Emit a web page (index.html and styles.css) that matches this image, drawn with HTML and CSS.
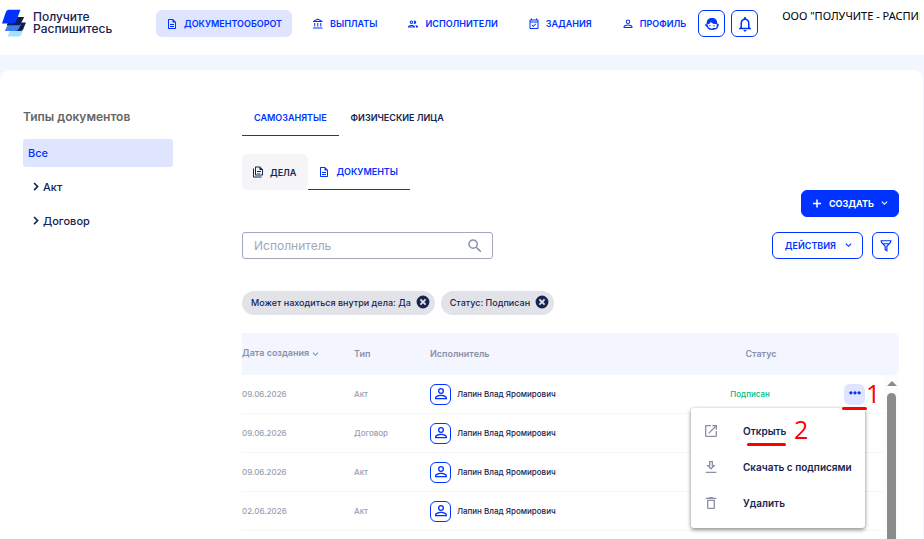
FILE: index.html
```html
<!DOCTYPE html>
<html lang="ru">
<head>
    <meta charset="UTF-8" />
    <meta name="viewport" content="width=device-width, initial-scale=1.0" />
    <title>Получите Распишитесь - Документы</title>
    <link rel="stylesheet" href="styles.css">
</head>
<body>

<!-- shared icons -->
<svg class="sprite" aria-hidden="true">
    <symbol id="i-doc" viewBox="0 0 24 24"><path d="M8 16h8v2H8zm0-4h8v2H8zm6-10H6c-1.100 0-2 .9-2 2v16c0 1.100.890 2 1.990 2H18c1.100 0 2-.9 2-2V8l-6-6zm4 18H6V4h7v5h5v11z"/></symbol>
    <symbol id="i-docs" viewBox="0 0 24 24"><path d="M16 1H8c-1.100 0-2 .9-2 2v14c0 1.100.9 2 2 2h12c1.100 0 2-.9 2-2V7l-6-6zm4 16H8V3h7v5h5v9zM2 5h2v16h15v2H4c-1.100 0-2-.9-2-2V5zm8 5h8v2h-8zm0 4h6v1h-6z"/></symbol>
    <symbol id="i-bank" viewBox="0 0 24 24"><path d="M6.500 10h-2v7h2v-7zm6 0h-2v7h2v-7zm8.500 9H2v2h19v-2zm-2.500-9h-2v7h2v-7zm-7-6.740L16.710 6H6.290l5.210-2.740m0-2.260L2 6v2h19V6l-9.500-5z"/></symbol>
    <symbol id="i-people" viewBox="0 0 24 24"><path d="M9 13.750c-2.340 0-7 1.170-7 3.500V19h14v-1.750c0-2.330-4.660-3.500-7-3.500zM4.340 17c.840-.580 2.870-1.250 4.660-1.250s3.820.670 4.660 1.250H4.340zM9 12c1.930 0 3.500-1.570 3.500-3.500S10.930 5 9 5 5.500 6.570 5.500 8.500 7.070 12 9 12zm0-5c.830 0 1.500.670 1.500 1.500S9.830 10 9 10s-1.500-.670-1.500-1.500S8.170 7 9 7zm7.040 6.810c1.160.840 1.960 1.960 1.960 3.440V19h4v-1.750c0-2.020-3.500-3.170-5.960-3.440zM15 12c1.930 0 3.500-1.570 3.500-3.500S16.930 5 15 5c-.540 0-1.040.130-1.500.350.630.890 1 1.980 1 3.150s-.370 2.260-1 3.150c.460.220.960.350 1.500.350z"/></symbol>
    <symbol id="i-task" viewBox="0 0 24 24"><path d="M19 3h-1V1h-2v2H8V1H6v2H5c-1.100 0-2 .9-2 2v15c0 1.100.9 2 2 2h14c1.100 0 2-.9 2-2V5c0-1.100-.9-2-2-2zm0 17H5V9h14v11zM5 7V5h14v2H5zm5.600 11.200l6-6-1.400-1.400-4.600 4.600-2.100-2.100-1.400 1.400z"/></symbol>
    <symbol id="i-person" viewBox="0 0 24 24"><path d="M12 3a4.500 4.500 0 1 0 0 9 4.500 4.500 0 0 0 0-9zm0 2a2.500 2.500 0 1 1 0 5 2.500 2.500 0 0 1 0-5zM12 13c-4 0-9 1.500-9 5v2h18v-2C21 14.500 16 13 12 13zm7 5H5c0-1.500 3.500-3 7-3s7 1.500 7 3z"/></symbol>
    <symbol id="i-bell" viewBox="0 0 24 24"><path d="M12 22c1.100 0 2-.9 2-2h-4c0 1.100.9 2 2 2zm6-6v-5c0-3.070-1.630-5.640-4.500-6.320V4a1.500 1.500 0 0 0-3 0v.680C7.640 5.360 6 7.920 6 11v5l-2 2v1h16v-1l-2-2zm-2 1H8v-6c0-2.480 1.510-4.500 4-4.500s4 2.020 4 4.500v6z"/></symbol>
    <symbol id="i-support" viewBox="0 0 24 24"><path fill="none" stroke="currentColor" stroke-width="2" d="M5 14c0 3.500 3 6 7 6 2 0 3.500-.5 4.500-1.500"/><path d="M12 3C7 3 4 6 4 10.500V13c4-.5 5.500-2.500 6-4.500 2 3 5.500 4 10 3.500V11c0-5-3-8-8-8zM2 11.500h3v4.500H4q-2 0-2-2zM19 11.500h3V14q0 3-3 3zM19 16h2c0 2.500-2 4-5 4h-3v-2h3c2 0 3-1 3-2z"/><circle cx="9" cy="14.500" r="1"/><circle cx="15" cy="14.500" r="1"/></symbol>
    <symbol id="i-down" viewBox="0 0 24 24"><path d="M6 6l6 6 6-6 2 2-8 8-8-8z"/></symbol>
    <symbol id="i-right" viewBox="0 0 24 24"><path d="M7 1l11 11L7 23l-3-3 8-8-8-8z"/></symbol>
    <symbol id="i-plus" viewBox="0 0 24 24"><path d="M20 12.500h-6.500V19h-3v-6.500H4v-3h6.500V3h3v6.500H20z"/></symbol>
    <symbol id="i-search" viewBox="0 0 24 24"><path d="M15.500 14h-.790l-.280-.270A6.470 6.470 0 0 0 16 9.500 6.500 6.500 0 1 0 9.500 16c1.610 0 3.090-.590 4.230-1.570l.270.280v.790l5 4.990L20.490 19l-4.990-5zm-6 0C7.010 14 5 11.990 5 9.500S7.010 5 9.500 5 14 7.010 14 9.500 11.990 14 9.500 14z"/></symbol>
    <symbol id="i-filter" viewBox="0 0 24 24"><path d="M2.500 2h19l-1 4.500-6 6.500v9L9.500 19v-6l-6-6.500zm2.600 2l.4 1.700L7 7.300h10l1.500-1.600.4-1.700zM8.700 9.200l2.800 3v5.700l1 .6v-6.300l2.800-3z"/></symbol>
    <symbol id="i-cancel" viewBox="0 0 24 24"><path d="M12 1a11 11 0 1 0 0 22 11 11 0 0 0 0-22zm5.500 14.300l-2.200 2.200L12 14.200l-3.300 3.300-2.200-2.200L9.800 12 6.500 8.700l2.200-2.200L12 9.800l3.300-3.300 2.200 2.200-3.300 3.300z"/></symbol>
    <symbol id="i-open" viewBox="0 0 24 24"><path d="M19 19H5V5h7V3H5a2 2 0 0 0-2 2v14a2 2 0 0 0 2 2h14c1.100 0 2-.9 2-2v-7h-2v7zM14 3v2h3.590l-9.830 9.830 1.410 1.410L19 6.410V10h2V3h-7z"/></symbol>
    <symbol id="i-download" viewBox="0 0 24 24"><path d="M19 9h-4V3H9v6H5l7 7 7-7zm-8 2V5h2v6h1.170L12 13.170 9.830 11H11zm-7 8h16v2H4z"/></symbol>
    <symbol id="i-trash" viewBox="0 0 24 24"><path d="M16 9v10H8V9h8m-1.500-6h-5l-1 1H4v2h16V4h-4.500l-1-1zM18 7H6v12c0 1.100.9 2 2 2h8c1.100 0 2-.9 2-2V7z"/></symbol>
    <symbol id="i-dots" viewBox="0 0 24 24"><circle cx="5" cy="10" r="2.800"/><circle cx="12" cy="10" r="2.800"/><circle cx="19" cy="10" r="2.800"/></symbol>
</svg>

<header class="header">
    <a class="logo" href="#">
        <svg class="logo-mark" viewBox="0 0 26 30" aria-hidden="true">
            <path fill="#a5e1ff" d="M11 20h13l-3 7q-1 2-3 2H6l3-7q1-2 2-2z"/>
            <path fill="#101c4c" d="M12 14h14l-3 7q-1 2-3 2H8z"/>
            <path fill="#3f80f0" d="M8 15h13l-3 6q-1 2-3 2H3l3-6q1-2 2-2z"/>
            <path fill="#101c4c" d="M10 8h14l-3 6q-1 3-3 3H5z"/>
            <path fill="#0033ff" d="M7 0h13l-4 11q-1 4-4 4H0L4 3q1-3 3-3z"/>
        </svg>
        <span>Получите<br>Распишитесь</span>
    </a>
    <nav class="nav">
        <a class="nav-link active" href="#"><svg class="icon"><use href="#i-doc"/></svg>ДОКУМЕНТООБОРОТ</a>
        <a class="nav-link" href="#"><svg class="icon"><use href="#i-bank"/></svg>ВЫПЛАТЫ</a>
        <a class="nav-link" href="#"><svg class="icon"><use href="#i-people"/></svg>ИСПОЛНИТЕЛИ</a>
        <a class="nav-link" href="#"><svg class="icon"><use href="#i-task"/></svg>ЗАДАНИЯ</a>
        <a class="nav-link" href="#"><svg class="icon"><use href="#i-person"/></svg>ПРОФИЛЬ</a>
    </nav>
    <div class="header-buttons">
        <button class="btn btn-square" type="button" aria-label="Поддержка"><svg class="icon icon-lg"><use href="#i-support"/></svg></button>
        <button class="btn btn-square" type="button" aria-label="Уведомления"><svg class="icon icon-xl"><use href="#i-bell"/></svg></button>
    </div>
    <div class="company">ООО "ПОЛУЧИТЕ - РАСПИШИТЕСЬ"</div>
</header>

<main class="panel">
    <aside class="sidebar">
        <h2>Типы документов</h2>
        <a class="type active" href="#">Все</a>
        <a class="type nested" href="#"><svg class="icon icon-sm"><use href="#i-right"/></svg>Акт</a>
        <a class="type nested" href="#"><svg class="icon icon-sm"><use href="#i-right"/></svg>Договор</a>
    </aside>

    <section class="content">
        <div class="tabs">
            <button class="tab active" type="button">САМОЗАНЯТЫЕ</button>
            <button class="tab" type="button">ФИЗИЧЕСКИЕ ЛИЦА</button>
        </div>
        <div class="subtabs">
            <button class="subtab" type="button"><svg class="icon"><use href="#i-docs"/></svg>ДЕЛА</button>
            <button class="subtab active" type="button"><svg class="icon"><use href="#i-doc"/></svg>ДОКУМЕНТЫ</button>
        </div>

        <div class="create-row">
            <button class="btn btn-primary" type="button"><svg class="icon"><use href="#i-plus"/></svg>СОЗДАТЬ<svg class="icon icon-sm"><use href="#i-down"/></svg></button>
        </div>

        <div class="toolbar">
            <label class="search">
                <input type="text" placeholder="Исполнитель" aria-label="Исполнитель">
                <svg class="icon icon-xl"><use href="#i-search"/></svg>
            </label>
            <button class="btn btn-actions" type="button">ДЕЙСТВИЯ<svg class="icon icon-sm"><use href="#i-down"/></svg></button>
            <button class="btn btn-square" type="button" aria-label="Фильтр"><svg class="icon icon-md"><use href="#i-filter"/></svg></button>
        </div>

        <div class="chips">
            <span class="chip">Может находиться внутри дела: Да<button type="button" aria-label="Убрать фильтр"><svg class="icon icon-md"><use href="#i-cancel"/></svg></button></span>
            <span class="chip">Статус: Подписан<button type="button" aria-label="Убрать фильтр"><svg class="icon icon-md"><use href="#i-cancel"/></svg></button></span>
        </div>

        <div class="table-box">
            <table class="docs">
                <colgroup>
                    <col class="col-date"><col class="col-type"><col><col class="col-status"><col class="col-more">
                </colgroup>
                <thead>
                    <tr>
                        <th>Дата создания<svg class="icon icon-sm"><use href="#i-down"/></svg></th>
                        <th>Тип</th>
                        <th>Исполнитель</th>
                        <th class="status-head">Статус</th>
                        <th></th>
                    </tr>
                </thead>
                <tbody>
                    <tr>
                        <td>09.06.2026</td>
                        <td>Акт</td>
                        <td><div class="person"><span class="avatar"><svg class="icon icon-lg"><use href="#i-person"/></svg></span>Лапин Влад Яромирович</div></td>
                        <td class="status">Подписан</td>
                        <td class="more">
                            <button class="more-btn" type="button" aria-label="Меню"><svg class="icon icon-md"><use href="#i-dots"/></svg></button>
                            <span class="mark mark-one">1</span>
                            <span class="stroke stroke-one"></span>
                            <div class="menu">
                                <button type="button"><svg class="icon icon-lg"><use href="#i-open"/></svg><span class="menu-text">Открыть<span class="stroke stroke-two"></span><span class="mark mark-two">2</span></span></button>
                                <button type="button"><svg class="icon icon-lg"><use href="#i-download"/></svg>Скачать с подписями</button>
                                <button type="button"><svg class="icon icon-lg"><use href="#i-trash"/></svg>Удалить</button>
                            </div>
                        </td>
                    </tr>
                    <tr>
                        <td>09.06.2026</td>
                        <td>Договор</td>
                        <td><div class="person"><span class="avatar"><svg class="icon icon-lg"><use href="#i-person"/></svg></span>Лапин Влад Яромирович</div></td>
                        <td></td>
                        <td></td>
                    </tr>
                    <tr>
                        <td>09.06.2026</td>
                        <td>Акт</td>
                        <td><div class="person"><span class="avatar"><svg class="icon icon-lg"><use href="#i-person"/></svg></span>Лапин Влад Яромирович</div></td>
                        <td></td>
                        <td></td>
                    </tr>
                    <tr>
                        <td>02.06.2026</td>
                        <td>Акт</td>
                        <td><div class="person"><span class="avatar"><svg class="icon icon-lg"><use href="#i-person"/></svg></span>Лапин Влад Яромирович</div></td>
                        <td></td>
                        <td></td>
                    </tr>
                </tbody>
            </table>
            <div class="scrollbar"><span class="arrow"></span><span class="thumb"></span></div>
        </div>
    </section>
</main>

</body>
</html>
```

FILE: styles.css
```css
* {
    box-sizing: border-box;
}
body {
    margin: 0;
    height: 100vh;
    display: flex;
    flex-direction: column;
    overflow: hidden;
    background: #f3f6ff;
    color: #172350;
    font-family: Inter, "Noto Sans", sans-serif;
    font-size: 9px;
    font-weight: 500;
}
a {
    color: inherit;
    text-decoration: none;
}
button, input {
    font: inherit;
    color: inherit;
    margin: 0;
}
button {
    padding: 0;
    border: none;
    background: none;
    cursor: pointer;
}
.sprite {
    position: absolute;
    width: 0;
    height: 0;
}
.icon {
    width: 12px;
    height: 12px;
    fill: currentColor;
    flex: none;
}
.icon-sm {
    width: 9px;
    height: 9px;
}
.icon-md {
    width: 14px;
    height: 14px;
}
.icon-lg {
    width: 16px;
    height: 16px;
}
.icon-xl {
    width: 18px;
    height: 18px;
}

/* header */
.header {
    display: flex;
    align-items: flex-start;
    flex: none;
    height: 55px;
    padding-top: 9px;
    background: #fff;
}
.logo {
    display: flex;
    gap: 7px;
    flex: none;
    width: 154px;
    padding-left: 2px;
    font-size: 12px;
    line-height: 12px;
}
.logo span {
    padding-top: 2px;
}
.logo-mark {
    width: 24px;
    height: 29px;
}
.nav {
    display: flex;
    gap: 10px;
    flex: none;
    padding: 1px 2px;
}
.nav-link {
    display: flex;
    align-items: center;
    gap: 6px;
    height: 27px;
    padding: 0 10px;
    border-radius: 6px;
    color: #0033ff;
    font-weight: 600;
}
.nav-link.active {
    background: #e0e5ff;
}
.header-buttons {
    display: flex;
    gap: 6px;
    padding-top: 1px;
}
.company {
    flex: 1;
    min-width: 0;
    margin: 0 4px 0 24px;
    overflow: hidden;
    white-space: nowrap;
    color: #000;
    font-family: "Noto Sans", sans-serif;
    font-size: 11px;
    font-weight: 400;
    line-height: 14px;
}
.btn {
    display: flex;
    align-items: center;
    justify-content: center;
    flex: none;
    height: 27px;
    border: 1px solid #0033ff;
    border-radius: 6px;
    background: #fff;
    color: #0033ff;
    font-weight: 600;
}
.btn-square {
    width: 27px;
}
.btn-primary {
    gap: 6px;
    padding: 0 9px;
    background: #0033ff;
    color: #fff;
    font-weight: 700;
}
.btn-actions {
    gap: 8px;
    padding: 0 9px 0 12px;
    margin-left: auto;
    margin-right: 9px;
}

/* main panel */
.panel {
    display: flex;
    flex: 1;
    gap: 69px;
    margin: 15px 1px 0 0;
    padding: 30px 24px 0 23px;
    border-radius: 10px 10px 0 0;
    background: #fff;
}
.sidebar {
    flex: none;
    width: 150px;
    font-size: 11px;
}
.sidebar h2 {
    margin: 8px 0 13px;
    color: #666;
    font-size: 12px;
    font-weight: 600;
    line-height: 18px;
}
.type {
    display: flex;
    align-items: center;
    height: 28px;
    margin-bottom: 6px;
    padding: 0 5px 1px;
    border-radius: 3px;
}
.type.active {
    background: #e0e5ff;
    color: #0033ff;
}
.type.nested {
    gap: 2px;
    padding: 0 9px 1px;
}
.content {
    display: flex;
    flex-direction: column;
    flex: 1;
    min-width: 0;
}
.tabs, .subtabs {
    display: flex;
    height: 36px;
}
.tab {
    padding: 0 12px;
    border-bottom: 1px solid transparent;
    font-weight: 600;
}
.subtabs {
    margin-top: 18px;
}
.subtab {
    display: flex;
    align-items: center;
    gap: 6px;
    padding: 0 12px 0 10px;
    border-radius: 6px;
    background: #f5f5f8;
    font-weight: 600;
}
.tab.active, .subtab.active {
    border-bottom: 1px solid #0033ff;
    border-radius: 0;
    background: #fff;
    color: #0033ff;
}
.create-row {
    display: flex;
    justify-content: flex-end;
}
.toolbar {
    display: flex;
    margin-top: 15px;
}
.search {
    display: flex;
    align-items: center;
    width: 251px;
    height: 27px;
    padding: 0 8px 0 11px;
    border: 1px solid #a3a7bc;
    border-radius: 3px;
    color: #8b90a9;
}
.search input {
    flex: 1;
    min-width: 0;
    padding: 0;
    border: none;
    outline: none;
    background: none;
    font-size: 12px;
    font-weight: 400;
}
.search input::placeholder {
    color: #a3a7bc;
}
.chips {
    display: flex;
    gap: 6px;
    margin-top: 32px;
}
.chip {
    display: flex;
    align-items: center;
    gap: 5px;
    height: 24px;
    padding: 0 5px 2px 9px;
    border-radius: 12px;
    background: #e2e3e9;
}
.chip button {
    display: flex;
}

/* documents table */
.table-box {
    position: relative;
    flex: 1;
    margin-top: 18px;
}
.docs {
    width: 100%;
    table-layout: fixed;
    border-collapse: separate;
    border-spacing: 0;
}
.col-date {
    width: 112px;
}
.col-type {
    width: 76px;
}
.col-status {
    width: 130px;
}
.col-more {
    width: 84px;
}
.docs th {
    height: 42px;
    padding: 0 0 2px;
    background: #f3f6ff;
    color: #8b90a9;
    font-weight: 600;
    text-align: left;
    white-space: nowrap;
}
.docs th:last-child {
    border-radius: 0 6px 6px 0;
}
.docs th .icon {
    margin-left: 2px;
    vertical-align: middle;
}
.docs .status-head {
    padding-left: 22px;
    text-align: center;
}
.docs td {
    height: 39px;
    padding: 0;
    border-bottom: 1px solid #f5f6fa;
    color: #9a9eb3;
    font-size: 8px;
}
.person {
    display: flex;
    align-items: center;
    gap: 6px;
    color: #172350;
}
.avatar {
    display: flex;
    align-items: center;
    justify-content: center;
    width: 21px;
    height: 21px;
    border: 1px solid #0033ff;
    border-radius: 6px;
    color: #0033ff;
}
.docs .status {
    color: #00b884;
    text-align: center;
}
.docs .more {
    position: relative;
    padding-left: 29px;
}
.more-btn {
    display: flex;
    align-items: center;
    justify-content: center;
    width: 21px;
    height: 21px;
    border-radius: 6px;
    background: #e0e5ff;
    color: #0033ff;
}
.menu {
    position: absolute;
    top: 33px;
    right: 34px;
    z-index: 1;
    width: 174px;
    padding: 6px 0;
    border-radius: 3px;
    background: #fff;
    box-shadow: 0 2px 4px rgba(0, 0, 0, 0.4), 0 0 3px rgba(0, 0, 0, 0.15);
}
.menu button {
    display: flex;
    align-items: center;
    gap: 24px;
    width: 100%;
    height: 36px;
    padding: 0 0 2px 12px;
    color: #172350;
    font-size: 10px;
    font-weight: 600;
    white-space: nowrap;
}
.menu .icon {
    color: #8b90a9;
}
.menu-text {
    position: relative;
}

/* red step marks */
.mark {
    position: absolute;
    color: #ff0000;
    font-family: "Open Sans", sans-serif;
    font-size: 25px;
    font-weight: 400;
    line-height: 26px;
}
.mark-one {
    top: 5px;
    left: 51px;
    z-index: 1;
}
.mark-two {
    top: -9px;
    left: 51px;
}
.stroke {
    position: absolute;
    height: 3px;
    border-radius: 2px;
    background: #ff0000;
}
.stroke-one {
    top: 32px;
    left: 27px;
    z-index: 2;
    width: 25px;
}
.stroke-two {
    top: 18px;
    left: 4px;
    width: 39px;
}
.scrollbar {
    position: absolute;
    top: 42px;
    right: 0;
    bottom: 0;
    display: flex;
    flex-direction: column;
    align-items: center;
    gap: 7px;
    width: 15px;
    padding-top: 6px;
    background: #fcfcfc;
}
.arrow {
    border: 5px solid transparent;
    border-top: none;
    border-bottom: 5px solid #8b8b8b;
}
.thumb {
    flex: 1;
    width: 9px;
    border-radius: 5px 5px 0 0;
    background: #8b8b8b;
}
```
